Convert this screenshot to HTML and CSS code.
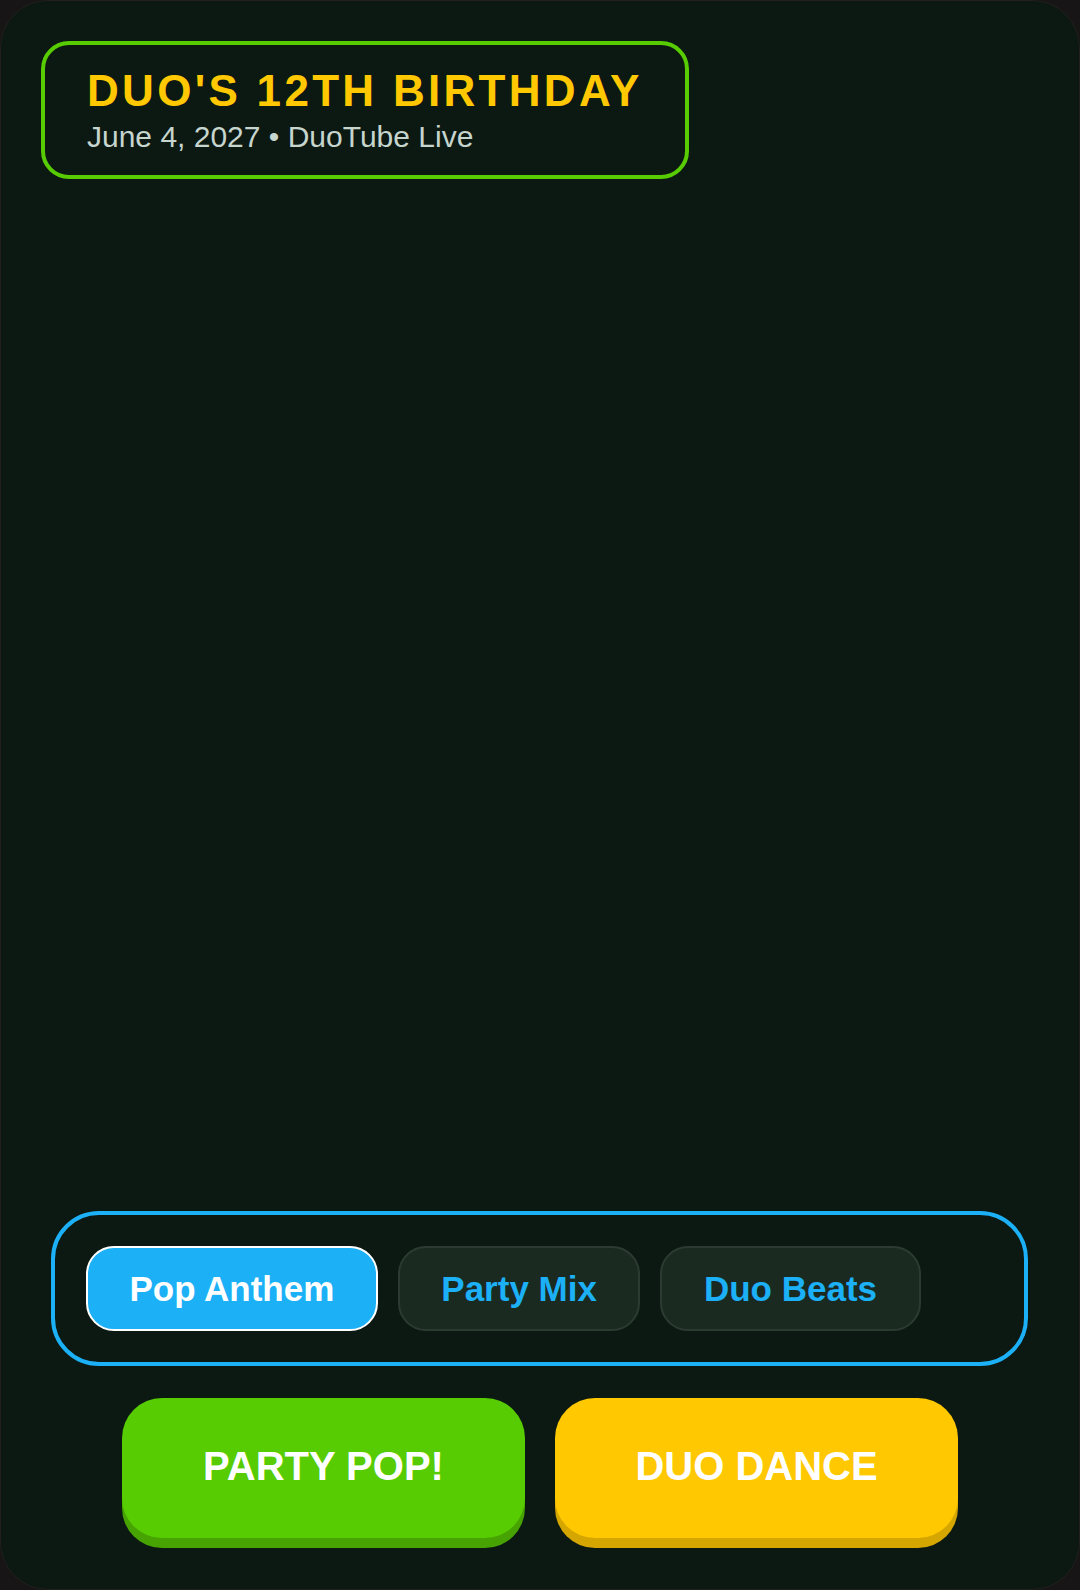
FILE: index.html
```html
<!DOCTYPE html>
<html>

<head>
    <link rel="stylesheet" href="styles.css">
</head>

<body>
    <div class="screen">
        <div class="event-card">
            <h1 class="event-title">DUO'S 12TH BIRTHDAY</h1>
            <div class="event-meta">June 4, 2027 &bull; DuoTube Live</div>
        </div>

        <div class="stage"></div>

        <!-- Song picker -->
        <div class="song-picker">
            <button class="song-tab active">Pop Anthem</button>
            <button class="song-tab">Party Mix</button>
            <button class="song-tab">Duo Beats</button>
        </div>

        <div class="actions">
            <button class="action-btn green">PARTY POP!</button>
            <button class="action-btn yellow">DUO DANCE</button>
        </div>
    </div>
</body>

</html>
```

FILE: styles.css
```css
body {
    font-family: "Liberation Sans", Arial, sans-serif;
    margin: 0;
    background-color: #171515;
}

.screen {
    width: 1080px;
    height: 1590px;
    box-sizing: border-box;
    padding: 41px;
    background-color: #0c1913;
    border: 1px solid #221f1f;
    border-radius: 48px;
    display: flex;
    flex-direction: column;
    overflow: hidden;
}

.event-card {
    align-self: flex-start;
    margin: -1px 0 0 -1px;
    padding: 22px 42px 20px;
    border: 4px solid #58cc02;
    border-radius: 28px;
}

.event-title {
    margin: 0;
    font-size: 44px;
    line-height: 1.1;
    font-weight: bold;
    letter-spacing: 3.3px;
    color: #ffc800;
}

.event-meta {
    margin-top: 4px;
    font-size: 30px;
    line-height: 1.2;
    color: #c6d5cd;
}

.stage {
    flex: 1;
}

.song-picker {
    margin: 0 10px 0 9px;
    padding: 31px;
    border: 4px solid #1cb0f6;
    border-radius: 48px;
    display: flex;
    gap: 20px;
}

.song-tab {
    height: 85px;
    box-sizing: border-box;
    padding: 0 41.5px;
    font-family: "Liberation Sans", Arial, sans-serif;
    font-size: 35px;
    font-weight: bold;
    color: #1cb0f6;
    background-color: #1b2a21;
    border: 2px solid #2c3b32;
    border-radius: 28px;
    cursor: pointer;
}

.song-tab.active {
    color: white;
    background-color: #1cb0f6;
    border-color: white;
}

.actions {
    margin: 32px 0 10px;
    display: flex;
    justify-content: center;
    gap: 30px;
}

.action-btn {
    width: 403px;
    height: 140px;
    padding: 0 0 4px;
    font-family: "Liberation Sans", Arial, sans-serif;
    font-size: 40px;
    font-weight: bold;
    color: white;
    border: none;
    border-radius: 40px;
    cursor: pointer;
}

.action-btn.green {
    background-color: #58cc02;
    box-shadow: 0 10px 0 #46a302;
}

.action-btn.yellow {
    background-color: #ffc800;
    box-shadow: 0 10px 0 #d6a600;
}
```
